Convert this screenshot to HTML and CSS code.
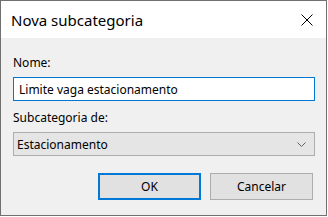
FILE: index.html
```html
<!DOCTYPE html>
<html lang="pt">
<head>
    <meta charset="UTF-8">
    <title>Nova subcategoria</title>
    <link rel="stylesheet" href="styles.css">
</head>
<body>
    <div class="dialog">
        <div class="title-bar">
            <span class="title">Nova subcategoria</span>
            <svg class="close" width="12" height="12" viewBox="0 0 12 12">
                <path d="M0.5 0.5 L11.5 11.5 M11.5 0.5 L0.5 11.5" stroke="#000" stroke-width="1" fill="none"/>
            </svg>
        </div>
        <div class="content">
            <label class="field-label">Nome:</label>
            <div class="text-input">Limite vaga estacionamento</div>
            <label class="field-label second">Subcategoria de:</label>
            <div class="combo">
                <span>Estacionamento</span>
                <svg width="9" height="5" viewBox="0 0 9 5">
                    <polyline points="0.5,0.5 4.5,4.5 8.5,0.5" stroke="#606060" stroke-width="1" fill="none"/>
                </svg>
            </div>
            <div class="buttons">
                <button class="btn default">OK</button>
                <button class="btn">Cancelar</button>
            </div>
        </div>
    </div>
</body>
</html>
```

FILE: styles.css
```css
body {
    margin: 0;
    background-color: #ffffff;
    font-family: 'Noto Sans', sans-serif;
    color: #000;
}
.dialog {
    width: 327px;
    height: 216px;
    box-sizing: border-box;
    border: 1px solid #707070;
    background-color: #f0f0f0;
    display: flex;
    flex-direction: column;
}
.title-bar {
    height: 37px;
    background-color: #fff;
    display: flex;
    align-items: center;
    justify-content: space-between;
    padding-left: 10px;
    padding-right: 13px;
}
.title {
    font-size: 15px;
}
.close {
    display: block;
}
.content {
    padding: 17px 11px 0 12px;
    font-size: 12px;
}
.field-label {
    display: block;
    line-height: 16px;
}
.field-label.second {
    margin-top: 9px;
}
.text-input, .combo {
    margin-top: 6px;
    height: 24px;
    box-sizing: border-box;
    display: flex;
    align-items: center;
}
.text-input {
    border: 1px solid #0078d7;
    background-color: #fff;
    padding-left: 5px;
}
.combo {
    border: 1px solid #adadad;
    background-color: #e5e5e5;
    padding: 0 8px 0 3px;
    justify-content: space-between;
}
.combo svg {
    display: block;
}
.buttons {
    display: flex;
    justify-content: flex-end;
    gap: 9px;
    margin-top: 17px;
    margin-right: 2px;
}
.btn {
    width: 103px;
    height: 27px;
    box-sizing: border-box;
    border: 1px solid #adadad;
    background-color: #e1e1e1;
    font-family: 'Noto Sans', sans-serif;
    font-size: 12px;
    color: #000;
    padding: 0;
}
.btn.default {
    border: 2px solid #0078d7;
}
```
